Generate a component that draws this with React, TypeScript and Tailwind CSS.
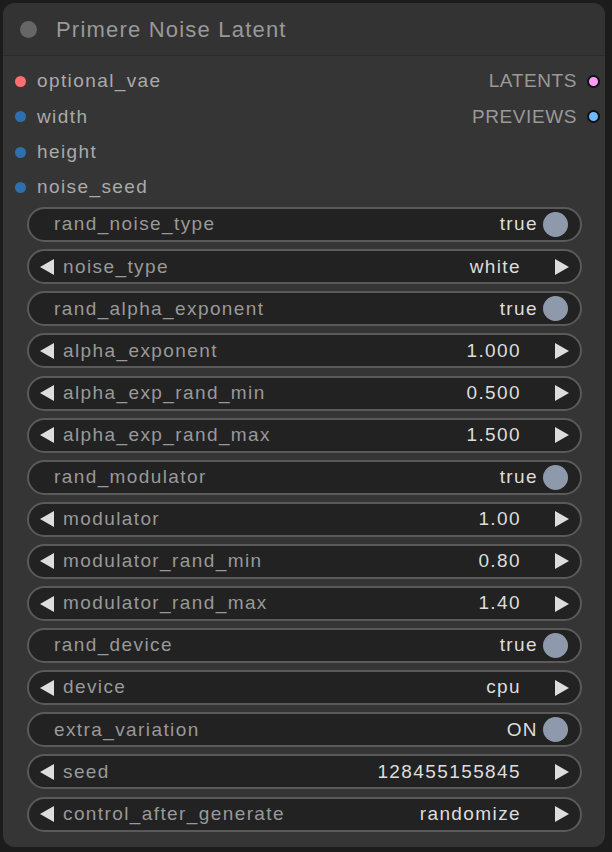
import React from 'react';

type Widget =
  | { kind: 'toggle'; label: string; value: string }
  | { kind: 'combo'; label: string; value: string };

const inputs = [
  { name: 'optional_vae', color: 'bg-[#ff6e6e]' },
  { name: 'width', color: 'bg-[#2f6fad]' },
  { name: 'height', color: 'bg-[#2f6fad]' },
  { name: 'noise_seed', color: 'bg-[#2f6fad]' },
];

const outputs = [
  { name: 'LATENTS', color: 'bg-[#ff9cf9]' },
  { name: 'PREVIEWS', color: 'bg-[#70b8ff]' },
];

const widgets: Widget[] = [
  { kind: 'toggle', label: 'rand_noise_type', value: 'true' },
  { kind: 'combo', label: 'noise_type', value: 'white' },
  { kind: 'toggle', label: 'rand_alpha_exponent', value: 'true' },
  { kind: 'combo', label: 'alpha_exponent', value: '1.000' },
  { kind: 'combo', label: 'alpha_exp_rand_min', value: '0.500' },
  { kind: 'combo', label: 'alpha_exp_rand_max', value: '1.500' },
  { kind: 'toggle', label: 'rand_modulator', value: 'true' },
  { kind: 'combo', label: 'modulator', value: '1.00' },
  { kind: 'combo', label: 'modulator_rand_min', value: '0.80' },
  { kind: 'combo', label: 'modulator_rand_max', value: '1.40' },
  { kind: 'toggle', label: 'rand_device', value: 'true' },
  { kind: 'combo', label: 'device', value: 'cpu' },
  { kind: 'toggle', label: 'extra_variation', value: 'ON' },
  { kind: 'combo', label: 'seed', value: '128455155845' },
  { kind: 'combo', label: 'control_after_generate', value: 'randomize' },
];

const Arrow = ({ dir }: { dir: 'left' | 'right' }) => (
  <svg width="16" height="18" viewBox="0 0 16 18" className="shrink-0">
    {dir === 'left' ? (
      <polygon points="15,1 15,17 1,9" fill="#dddddd" />
    ) : (
      <polygon points="1,1 1,17 15,9" fill="#dddddd" />
    )}
  </svg>
);

const WidgetRow = ({ w }: { w: Widget }) => {
  if (w.kind === 'toggle') {
    return (
      <div className="flex items-center h-[35px] rounded-full bg-[#222222] border-2 border-[#5a5a5a] pl-[25px] pr-[12px]">
        <span className="flex-1 text-[#999999]">{w.label}</span>
        <span className="text-[#dddddd] mr-[5px]">{w.value}</span>
        <span className="w-[25px] h-[25px] rounded-full bg-[#8e9aab]" />
      </div>
    );
  }
  return (
    <div className="flex items-center h-[35px] rounded-full bg-[#222222] border-2 border-[#5a5a5a] pl-[10px] pr-[10px]">
      <Arrow dir="left" />
      <span className="flex-1 ml-[8px] text-[#999999]">{w.label}</span>
      <span className="text-[#dddddd] mr-[33px]">{w.value}</span>
      <Arrow dir="right" />
    </div>
  );
};

export default function App() {
  return (
    <div
      className="w-[612px] h-[852px] bg-[#1c1c1c] p-[3px] pr-[7px] pb-[5px]"
      style={{ fontFamily: '"Liberation Sans", Arial, sans-serif' }}
    >
      <div className="h-full rounded-[12px] bg-[#353535] overflow-hidden">
        <div className="h-[53px] flex items-center bg-[#333333] border-b border-[#2b2b2b] px-[17px]">
          <span className="w-[17px] h-[17px] rounded-full bg-[#666666]" />
          <span className="ml-[19px] text-[22px] tracking-[1.2px] text-[#999999]">Primere Noise Latent</span>
        </div>

        <div className="relative pt-[8px] tracking-[1.4px]">
          {inputs.map((i) => (
            <div key={i.name} className="h-[35.3px] flex items-center pl-[12px] text-[19px] text-[#aaaaaa]">
              <span className={`w-[11px] h-[11px] rounded-full ${i.color}`} />
              <span className="ml-[11px]">{i.name}</span>
            </div>
          ))}
          <div className="absolute top-[8px] right-[5px]">
            {outputs.map((o) => (
              <div key={o.name} className="h-[35.3px] flex items-center justify-end text-[19px] text-[#999999]">
                <span className="tracking-[0.6px]">{o.name}</span>
                <span className={`ml-[10px] w-[13px] h-[13px] rounded-full border-2 border-[#111111] ${o.color}`} />
              </div>
            ))}
          </div>
        </div>

        <div className="flex flex-col gap-[7.1px] pt-[2px] pl-[24px] pr-[23px] text-[19px] tracking-[1.4px]">
          {widgets.map((w) => (
            <WidgetRow key={w.label} w={w} />
          ))}
        </div>
      </div>
    </div>
  );
}
